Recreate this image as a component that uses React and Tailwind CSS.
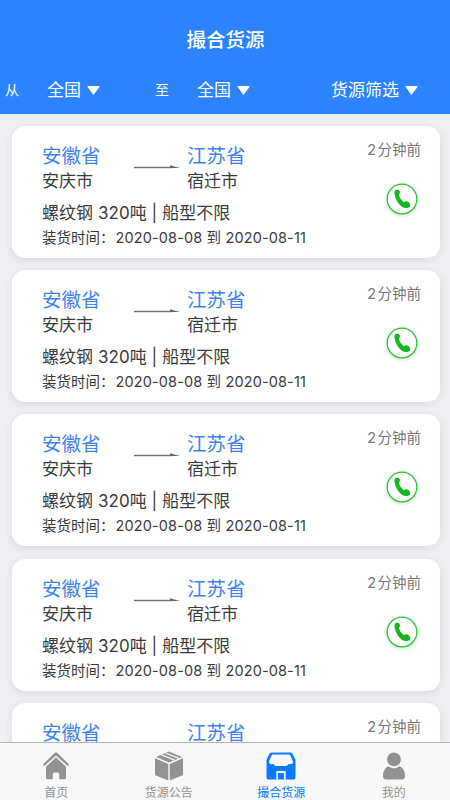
import React from 'react';

const shipments = Array.from({ length: 5 }, (_, id) => ({
	id,
	fromProvince: '安徽省',
	fromCity: '安庆市',
	toProvince: '江苏省',
	toCity: '宿迁市',
	start: '2020-08-08',
	end: '2020-08-11'
}));

const HomeIcon = () => (
	<svg width="28" height="28" viewBox="0 0 28 28" fill="currentColor">
		<path d="M14 .5q.9 0 1.600.7L26.600 12q.7.7.1 1.400-.8.7-1.600 0L14 3.600 2.900 13.400q-.8.7-1.600 0-.6-.7.1-1.400L12.400 1.200Q13.100.5 14 .5Z" />
		<path d="m14 5.400 10 9.300v11.100q0 1.500-1.400 1.500h-5.400v-5.400q0-1.500-1.400-1.500h-3.600q-1.400 0-1.400 1.500v5.400H5.400Q4 27.300 4 25.800V14.700Z" />
	</svg>
);

const BoxIcon = () => (
	<svg width="28" height="30" viewBox="0 0 28 30" fill="currentColor">
		<path d="M14 .6 27 5.900 14 11.400 1 5.900Z" />
		<path d="M0 7.300 13.300 13v16.400L1 24.600q-1-.4-1-1.500Z" />
		<path d="M28 7.300 14.700 13v16.400L27 24.600q1-.4 1-1.500Z" />
		<path d="m6.200 3.700 13.300 5.500M10.600 2l13.300 5.400" stroke="#f8f8f8" strokeWidth="1.300" fill="none" />
	</svg>
);

const ShopIcon = () => (
	<svg width="30" height="28" viewBox="0 0 30 28" fill="currentColor">
		<path d="M5.500.5h19q1.500 0 2.200 1.500L29.500 8v17.500q0 2-2 2h-25q-2 0-2-2V8l2.800-6Q4 .5 5.500.5Z" />
		<path
			d="M7 2.600h16q1 0 1.400.9L27 9.400q.2 2.900-2.500 2.900-1 0-1.900-.5-.6 2.100-2.600 2.100H10q-2 0-2.600-2.100-.9.500-1.900.5Q2.800 12.300 3 9.400l2.600-5.900Q6 2.600 7 2.600Z"
			fill="#f8f8f8"
		/>
		<path d="M10.300 27.500V19h9.400v8.500h-1.600v-6.600h-6.200v6.600Z" fill="#f8f8f8" />
	</svg>
);

const UserIcon = () => (
	<svg width="24" height="28" viewBox="0 0 24 28" fill="currentColor">
		<circle cx="12" cy="7.400" r="6.900" />
		<path d="M6.300 14.300Q12 18.500 17.700 14.300 23 17 23 24q0 3.500-3.500 3.500h-15Q1 27.500 1 24q0-7 5.300-9.700Z" />
	</svg>
);

const tabs = [
	{ label: '首页', Icon: HomeIcon },
	{ label: '货源公告', Icon: BoxIcon },
	{ label: '撮合货源', Icon: ShopIcon, active: true },
	{ label: '我的', Icon: UserIcon }
];

const Caret = () => (
	<svg width="13" height="9" viewBox="0 0 13 9" fill="white">
		<path d="M1 0h11q.8.200.4.900L7.100 8.300q-.6.800-1.200 0L.6.900Q.2.200 1 0Z" />
	</svg>
);

const PhoneIcon = () => (
	<svg width="32" height="32" viewBox="0 0 32 32" className="drop-shadow-[0_1px_2px_rgba(30,200,40,0.3)]">
		<circle cx="16" cy="16" r="14.800" fill="white" stroke="#35bd40" strokeWidth="1.300" />
		<path
			d="M8.500 9.200Q8.500 6.600 10.900 6.400q2.300 0 3 2.300.4 2-1.200 3.200 1.400 4.200 5.200 7.300 1.500-1.200 3.400-.7 2.500.9 3.100 2.900.1 2.500-2.200 3.300-3.400 1-6.700-1.300-5.500-4.300-6.700-11.500Q8.300 10.700 8.500 9.200Z"
			fill="#14b81e"
		/>
	</svg>
);

const ShipmentCard = ({ item }) => (
	<div className="flex h-[132px] shrink-0 justify-between rounded-[13px] bg-white pt-[18px] pr-[19px] pl-[30px] shadow-[0_2px_8px_rgba(0,0,0,0.09)]">
		<div className="whitespace-nowrap text-[#3a3a3a]">
			<div className="flex">
				<div className="w-[92px]">
					<p className="text-[19.5px] leading-6 text-[#3e82e8]">{item.fromProvince}</p>
					<p className="pt-px text-[17px] leading-[25px]">{item.fromCity}</p>
				</div>
				<svg width="46" height="6" viewBox="0 0 46 6" className="mt-5 mr-[7px]">
					<path d="M0 3.500h38" stroke="#777" strokeWidth="1.300" />
					<path d="M36 1.200 46 4.100H36Z" fill="#666" />
				</svg>
				<div>
					<p className="text-[19.5px] leading-6 text-[#3e82e8]">{item.toProvince}</p>
					<p className="pt-px text-[17px] leading-[25px]">{item.toCity}</p>
				</div>
			</div>
			<p className="mt-[7px] text-[17px] leading-6 tracking-[0.05px]">螺纹钢 320吨 | 船型不限</p>
			<p className="text-[14.5px] leading-[25px]">
				装货时间：
				<span className="ml-px tracking-[0.13px]">
					{item.start} 到 {item.end}
				</span>
			</p>
		</div>
		<div className="flex flex-col items-end">
			<span className="-mt-1.5 text-[14.5px] leading-6 text-[#777]">
				<span className="mr-[1.500px]">2</span>分钟前
			</span>
			<button className="mt-[21px] mr-[3px]" aria-label="拨打电话">
				<PhoneIcon />
			</button>
		</div>
	</div>
);

const App = () => {
	return (
		<div className="flex h-[800px] w-[450px] flex-col overflow-hidden bg-[#eeeef3] font-[Inter,'Noto_Sans_CJK_SC',sans-serif]">
			<header className="h-[114px] shrink-0 bg-[#2b83ff] text-white">
				<h1 className="pt-[27px] pl-px text-center text-[19.5px] leading-[26px] font-medium">撮合货源</h1>
				<div className="mt-6 flex h-[26px] items-center text-[17px] leading-[26px] whitespace-nowrap">
					<span className="w-[47px] pl-[5px] text-[14px]">从</span>
					<div className="flex w-[108px] items-center gap-[6px]">
						全国
						<Caret />
					</div>
					<span className="w-[42px] text-[14px]">至</span>
					<div className="flex w-[134px] items-center gap-[6px]">
						全国
						<Caret />
					</div>
					<div className="flex items-center gap-[6px]">
						货源筛选
						<Caret />
					</div>
				</div>
			</header>

			<main className="flex min-h-0 flex-1 flex-col gap-[12.200px] overflow-hidden pt-3 pr-2.5 pl-3">
				{shipments.map(item => (
					<ShipmentCard key={item.id} item={item} />
				))}
			</main>

			<nav className="grid h-[58px] shrink-0 grid-cols-4 border-t border-[#b4b4b6] bg-[#f8f8f8]">
				{tabs.map(({ label, Icon, active }) => (
					<div
						key={label}
						className={`flex flex-col items-center ${active ? 'text-[#0c7bfb]' : 'text-[#929292]'}`}
					>
						<div className="flex h-[41px] items-center pt-[4px]">
							<Icon />
						</div>
						<span className="text-[12px] leading-[17px]">{label}</span>
					</div>
				))}
			</nav>
		</div>
	);
};

export default App;
